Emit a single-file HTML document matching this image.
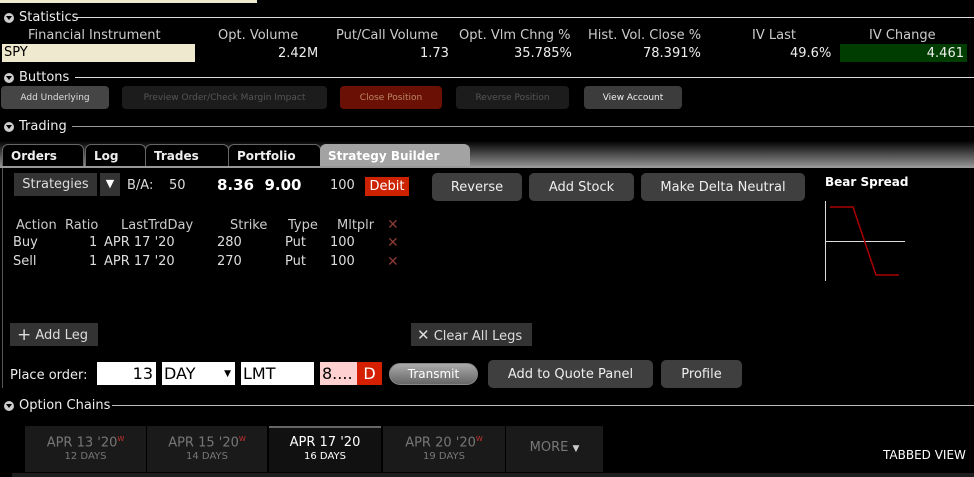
<!DOCTYPE html>
<html><head><meta charset="utf-8"><style>
*{margin:0;padding:0;box-sizing:border-box}
body{width:974px;height:477px;background:#000;position:relative;overflow:hidden;font-family:"DejaVu Sans","Liberation Sans",sans-serif;color:#ddd;font-size:13px}
.a{position:absolute;white-space:nowrap}
.hdr{position:absolute;left:4px;font-size:13px;color:#eee;display:flex;align-items:center}
.hdr i{display:inline-block;width:10px;height:10px;border-radius:50%;background:#ccc;margin-right:5px;position:relative}
.hdr i:after{content:"";position:absolute;left:2px;top:3px;border-left:3px solid transparent;border-right:3px solid transparent;border-top:4px solid #000}
.ln{position:absolute;height:1px;background:#ddd}
.sb{position:absolute;height:23px;border-radius:4px;font-size:9px;display:flex;align-items:center;justify-content:center}
.tab{position:absolute;top:144px;height:23px;border:1px solid #666;border-bottom:none;border-radius:6px 6px 0 0;background:#000;color:#eee;font-weight:bold;font-size:12px;padding:4px 0 0 8px}
.btn{position:absolute;background:#3f3f3f;border-radius:5px;color:#eee;font-size:13px;display:flex;align-items:center;justify-content:center}
.ct{position:absolute;top:426px;height:46px;background:#1a1a1a;color:#777;text-align:center;font-size:13px;padding-top:9px}
.ct small{display:block;font-size:10px;margin-top:1px}
.ct sup{color:#c33;font-size:7px}
.x{color:#8a3a33;font-weight:bold;font-size:14px}
.t1{top:1px}
</style></head><body>
<div class="a" style="left:0;top:0;width:257px;height:3px;background:#efe9cf"></div>

<div class="hdr" style="top:10px"><i></i>Statistics</div>
<div class="ln" style="left:77px;right:0;top:17px"></div>
<div class="a" style="left:28px;top:28px;color:#ccc">Financial Instrument</div>
<div class="a" style="left:218px;top:28px;color:#ccc">Opt. Volume</div>
<div class="a" style="left:336px;top:28px;color:#ccc">Put/Call Volume</div>
<div class="a" style="left:459px;top:28px;color:#ccc">Opt. Vlm Chng %</div>
<div class="a" style="left:588px;top:28px;color:#ccc">Hist. Vol. Close %</div>
<div class="a" style="left:752px;top:28px;color:#ccc">IV Last</div>
<div class="a" style="left:869px;top:28px;color:#ccc">IV Change</div>
<div class="a" style="left:2px;top:44px;width:193px;height:18px;background:#efe9cf;color:#000;padding-left:2px;line-height:18px">SPY</div>
<div class="a" style="left:278px;top:46px;color:#eee">2.42M</div>
<div class="a" style="left:420px;top:46px;color:#eee">1.73</div>
<div class="a" style="left:514px;top:46px;color:#eee">35.785%</div>
<div class="a" style="left:643px;top:46px;color:#eee">78.391%</div>
<div class="a" style="left:790px;top:46px;color:#eee">49.6%</div>
<div class="a" style="left:840px;top:44px;width:127px;height:18px;background:#003d00;color:#eee;text-align:right;padding-right:3px;line-height:19px">4.461</div>

<div class="hdr" style="top:70px"><i></i>Buttons</div>
<div class="ln" style="left:75px;right:0;top:77px"></div>
<div class="sb" style="left:1px;top:86px;width:108px;background:#454545;color:#ddd">Add Underlying</div>
<div class="sb" style="left:122px;top:86px;width:205px;background:#1c1c1c;color:#555">Preview Order/Check Margin Impact</div>
<div class="sb" style="left:340px;top:86px;width:102px;background:#6b1005;color:#b86">Close Position</div>
<div class="sb" style="left:456px;top:86px;width:113px;background:#1c1c1c;color:#555">Reverse Position</div>
<div class="sb" style="left:584px;top:86px;width:98px;background:#3c3c3c;color:#eee">View Account</div>

<div class="hdr" style="top:119px"><i></i>Trading</div>
<div class="ln" style="left:72px;right:0;top:126px;background:#999"></div>
<div class="a" style="left:0;top:134px;width:974px;height:34px;background:linear-gradient(#000,#000 20%,#999)"></div>
<div class="tab" style="left:2px;width:82px">Orders</div>
<div class="tab" style="left:85px;width:61px">Log</div>
<div class="tab" style="left:145px;width:84px">Trades</div>
<div class="tab" style="left:228px;width:93px">Portfolio</div>
<div class="tab" style="left:320px;width:150px;background:#a3a3a3;border-color:#a3a3a3;color:#fff;padding-left:7px">Strategy Builder</div>
<div class="a" style="left:0;top:166px;width:974px;height:2px;background:#999"></div>
<div class="a" style="left:2px;top:168px;width:1px;height:220px;background:#555"></div>

<div class="a" style="left:14px;top:173px;width:83px;height:23px;background:#333;color:#ddd;text-align:center;line-height:24px">Strategies</div>
<div class="a" style="left:100px;top:173px;width:20px;height:23px;background:#333;color:#fff;text-align:center;line-height:22px;font-size:11px">▼</div>
<div class="a" style="left:127px;top:178px;color:#ddd">B/A:</div>
<div class="a" style="left:169px;top:178px;color:#ddd">50</div>
<div class="a" style="left:217px;top:176px;color:#fff;font-weight:bold;font-size:15px">8.36&nbsp; 9.00</div>
<div class="a" style="left:330px;top:178px;color:#ddd">100</div>
<div class="a" style="left:365px;top:177px;width:44px;height:19px;background:#cc2200;color:#fff;text-align:center;line-height:20px">Debit</div>
<div class="btn" style="left:432px;top:173px;width:90px;height:28px">Reverse</div>
<div class="btn" style="left:529px;top:173px;width:105px;height:28px">Add Stock</div>
<div class="btn" style="left:641px;top:173px;width:164px;height:28px">Make Delta Neutral</div>
<div class="a" style="left:825px;top:175px;color:#fff;font-weight:bold;font-size:12px">Bear Spread</div>
<svg class="a" style="left:820px;top:198px" width="90" height="90"><line x1="5.5" y1="3" x2="5.5" y2="83" stroke="#ddd"/><line x1="5" y1="43.5" x2="85" y2="43.5" stroke="#ddd"/><polyline points="10,9 33,9 56,77 79,77" fill="none" stroke="#a00" stroke-width="1.5"/></svg>

<div class="a" style="left:16px;top:218px;color:#ccc">Action</div>
<div class="a" style="left:65px;top:218px;color:#ccc">Ratio</div>
<div class="a" style="left:121px;top:218px;color:#ccc">LastTrdDay</div>
<div class="a" style="left:230px;top:218px;color:#ccc">Strike</div>
<div class="a" style="left:288px;top:218px;color:#ccc">Type</div>
<div class="a" style="left:337px;top:218px;color:#ccc">Mltplr</div>
<div class="a x" style="left:387px;top:217px">✕</div>
<div class="a" style="left:13px;top:235px;color:#ddd">Buy</div>
<div class="a" style="left:89px;top:235px;color:#ddd">1</div>
<div class="a" style="left:104px;top:235px;color:#ddd">APR 17 '20</div>
<div class="a" style="left:217px;top:235px;color:#ddd">280</div>
<div class="a" style="left:285px;top:235px;color:#ddd">Put</div>
<div class="a" style="left:330px;top:235px;color:#ddd">100</div>
<div class="a x" style="left:387px;top:235px">✕</div>
<div class="a" style="left:13px;top:254px;color:#ddd">Sell</div>
<div class="a" style="left:89px;top:254px;color:#ddd">1</div>
<div class="a" style="left:104px;top:254px;color:#ddd">APR 17 '20</div>
<div class="a" style="left:217px;top:254px;color:#ddd">270</div>
<div class="a" style="left:285px;top:254px;color:#ddd">Put</div>
<div class="a" style="left:330px;top:254px;color:#ddd">100</div>
<div class="a x" style="left:387px;top:254px">✕</div>

<div class="a" style="left:10px;top:323px;width:88px;height:23px;background:#333;color:#ddd;line-height:24px;padding-left:7px"><span style="font-size:17px;vertical-align:-1px">+</span> Add Leg</div>
<div class="a" style="left:411px;top:323px;width:121px;height:23px;background:#333;color:#ddd;line-height:24px;padding-left:6px"><span style="font-size:15px">✕</span> Clear All Legs</div>

<div class="a" style="left:10px;top:368px;color:#eee">Place order:</div>
<div class="a" style="left:97px;top:362px;width:59px;height:23px;background:#fff;color:#000;text-align:right;padding-right:3px;font-size:16px;line-height:24px">13</div>
<div class="a" style="left:162px;top:362px;width:73px;height:23px;background:#fff;color:#000;padding-left:2px;font-size:16px;line-height:24px">DAY<span style="position:absolute;right:4px;font-size:9px">▼</span></div>
<div class="a" style="left:241px;top:362px;width:73px;height:23px;background:#fff;color:#000;padding-left:2px;font-size:16px;line-height:24px">LMT</div>
<div class="a" style="left:320px;top:362px;width:37px;height:23px;background:#ffd0d0;color:#000;padding-left:2px;font-size:16px;line-height:24px">8....</div>
<div class="a" style="left:357px;top:362px;width:25px;height:23px;background:#d42000;color:#fff;text-align:center;font-size:16px;line-height:24px">D</div>
<div class="a" style="left:389px;top:363px;width:89px;height:22px;border-radius:11px;background:linear-gradient(#aaa,#666);border:1px solid #888;color:#fff;text-align:center;line-height:21px;font-size:12px">Transmit</div>
<div class="btn" style="left:488px;top:360px;width:165px;height:28px">Add to Quote Panel</div>
<div class="btn" style="left:661px;top:360px;width:81px;height:28px">Profile</div>

<div class="hdr" style="top:398px"><i></i>Option Chains</div>
<div class="ln" style="left:112px;right:0;top:405px;background:#bbb"></div>
<div class="ct" style="left:25px;width:121px">APR 13 '20<sup>W</sup><small>12 DAYS</small></div>
<div class="ct" style="left:147px;width:120px">APR 15 '20<sup>W</sup><small>14 DAYS</small></div>
<div class="ct" style="left:269px;width:112px;background:#111;border-top:2px solid #666;color:#fff;padding-top:7px">APR 17 '20<small>16 DAYS</small></div>
<div class="ct" style="left:383px;width:122px">APR 20 '20<sup>W</sup><small>19 DAYS</small></div>
<div class="ct" style="left:506px;width:97px;padding-top:14px">MORE <span style="font-size:9px;color:#ccc">▼</span></div>
<div class="a" style="left:12px;top:473px;width:962px;height:4px;background:#1e1e1e"></div>
<div class="a" style="left:883px;top:448px;color:#fff;font-size:12px">TABBED VIEW</div>
</body></html>
